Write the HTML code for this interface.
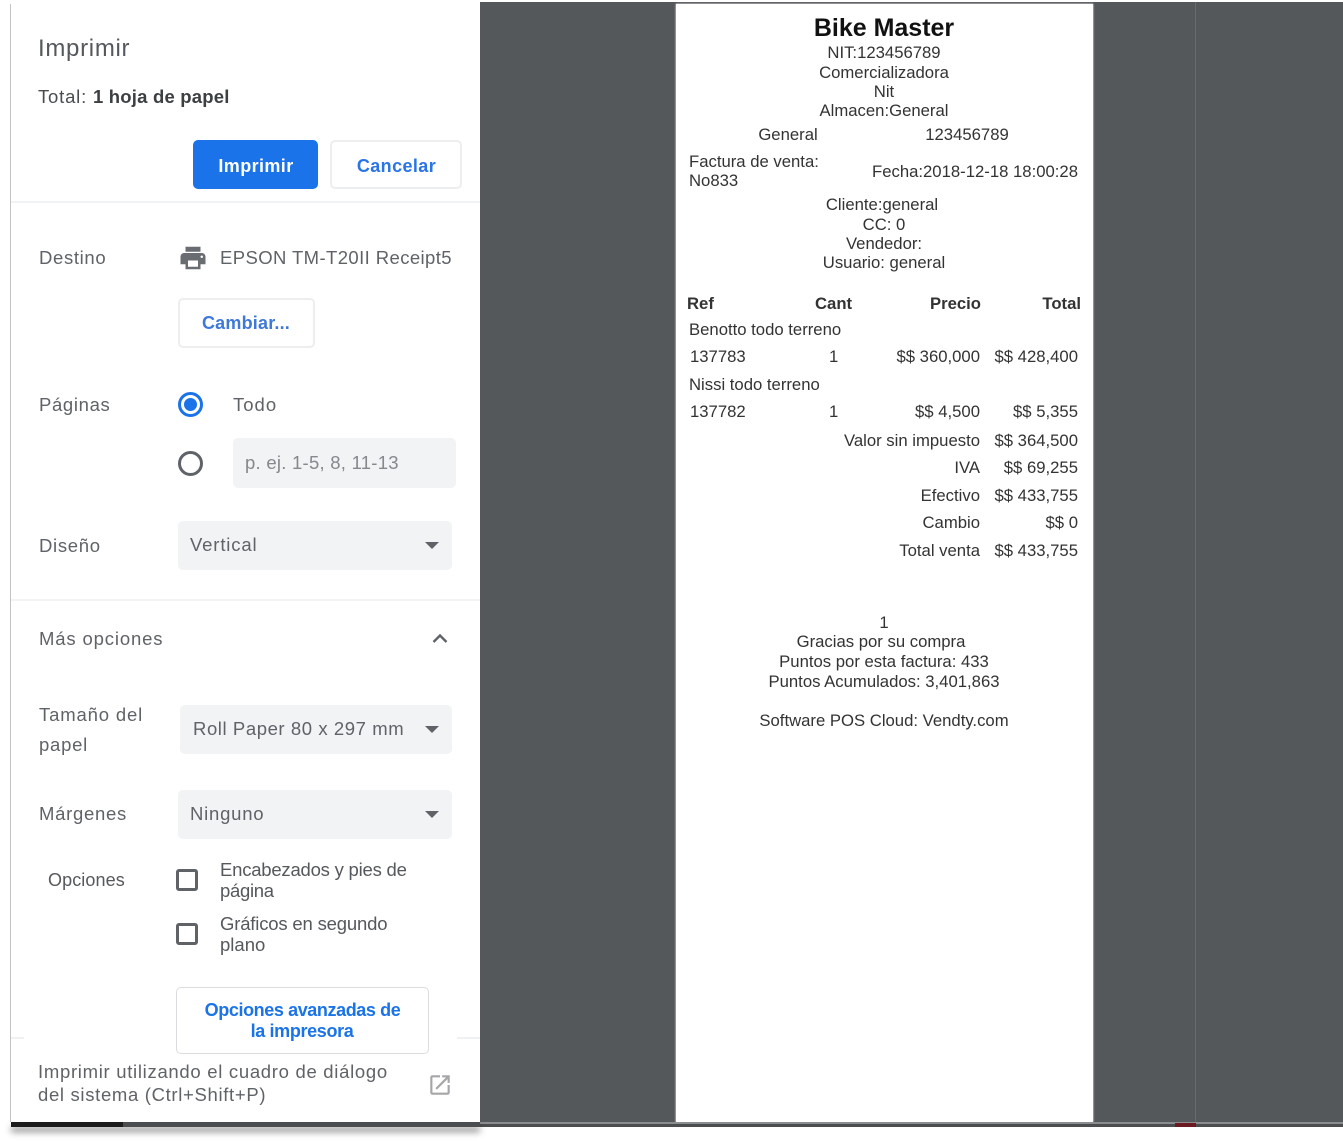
<!DOCTYPE html>
<html lang="es"><head><meta charset="utf-8"><title>Imprimir</title>
<style>
html,body{margin:0;padding:0;background:#fff}
#p{position:relative;width:1343px;height:1141px;overflow:hidden;background:#fff;font-family:"Liberation Sans",sans-serif}
.t{position:absolute;white-space:nowrap;line-height:20px;height:20px;filter:blur(.35px)}
.g{color:#5f6368;font-size:18.5px;letter-spacing:.35px}
.b{color:#2a75e6;font-weight:700;font-size:18px}
.r{color:#333;font-size:16.7px}
.c{transform:translateX(-50%)}
.box{position:absolute;box-sizing:border-box}
.btn{border:2px solid #eceef0;border-radius:5px;background:#fff}
.sel{background:#f1f3f4;border-radius:5px}
.cb{position:absolute;box-sizing:border-box;width:22px;height:22px;border:3px solid #5f6368;border-radius:3px}
.tri{position:absolute;width:0;height:0;border-left:7.5px solid transparent;border-right:7.5px solid transparent;border-top:7.5px solid #5f6368}
</style></head><body><div id="p">
<div class="box" style="left:480px;top:2px;width:863px;height:1120px;background:#54585b"></div>
<div class="box" style="left:1195px;top:2px;width:1px;height:1120px;background:#666a6d"></div>
<div class="box" style="left:480px;top:1122px;width:863px;height:2px;background:#8a8c8e"></div>
<div class="box" style="left:480px;top:1124px;width:863px;height:3px;background:#4b4d4f"></div>
<div class="box" style="left:1175px;top:1123px;width:21px;height:4px;background:#6b1a22"></div>
<div class="box" style="left:11px;top:1122px;width:469px;height:5px;background:#4b4d4f;box-shadow:0 5px 7px rgba(0,0,0,.45)"></div>
<div class="box" style="left:11px;top:1122px;width:112px;height:5px;background:#1c1c1c"></div>
<div class="box" style="left:10px;top:4px;width:470px;height:1118px;background:#fff;border-left:1px solid #c4c4c4"></div>

<div class="t g" style="left:38px;top:39px;font-size:24px;letter-spacing:.7px;color:#55585c">Imprimir</div>
<div class="t g" style="left:38px;top:87px;color:#4a4d50;letter-spacing:.8px">Total: <b style="color:#3c4043;letter-spacing:.2px">1 hoja de papel</b></div>
<div class="box" style="left:193px;top:140px;width:125px;height:49px;background:#1a73e8;border-radius:5px"></div>
<div class="t c" style="left:256px;top:156px;color:#fff;font-weight:700;font-size:18px;letter-spacing:.4px">Imprimir</div>
<div class="box btn" style="left:330px;top:140px;width:132px;height:49px"></div>
<div class="t b c" style="left:396.500px;top:156px;letter-spacing:.4px">Cancelar</div>
<div class="box" style="left:11px;top:201px;width:469px;height:2px;background:#f2f3f4"></div>

<div class="t g" style="left:39px;top:248px;letter-spacing:.65px">Destino</div>
<svg style="position:absolute;left:178px;top:243px" width="30" height="30" viewBox="0 0 24 24"><path fill="#696d72" d="M19 8H5c-1.66 0-3 1.34-3 3v6h4v4h12v-4h4v-6c0-1.66-1.34-3-3-3zm-3 11H8v-5h8v5zm3-7c-.55 0-1-.45-1-1s.45-1 1-1 1 .45 1 1-.45 1-1 1zm-1-9H6v4h12V3z"/></svg>
<div class="t g" style="left:220px;top:248px;letter-spacing:.4px">EPSON TM-T20II Receipt5</div>
<div class="box btn" style="left:178px;top:298px;width:137px;height:50px"></div>
<div class="t b c" style="left:246px;top:313px;color:#3f78d8;letter-spacing:.2px">Cambiar...</div>

<div class="t g" style="left:39px;top:395px;letter-spacing:.65px">Páginas</div>
<div class="box" style="left:178px;top:392px;width:25px;height:25px;border:3px solid #1a73e8;border-radius:50%"></div>
<div class="box" style="left:184px;top:398px;width:13px;height:13px;background:#1a73e8;border-radius:50%"></div>
<div class="t g" style="left:233px;top:395px;letter-spacing:1px">Todo</div>
<div class="box" style="left:178px;top:451px;width:25px;height:25px;border:3px solid #5f6368;border-radius:50%"></div>
<div class="box sel" style="left:233px;top:438px;width:223px;height:50px"></div>
<div class="t g" style="left:245px;top:453px;color:#85888c;letter-spacing:.25px">p. ej. 1-5, 8, 11-13</div>

<div class="t g" style="left:39px;top:536px;letter-spacing:.68px">Diseño</div>
<div class="box sel" style="left:178px;top:521px;width:274px;height:49px"></div>
<div class="t g" style="left:190px;top:535px;letter-spacing:.85px">Vertical</div>
<div class="tri" style="left:425px;top:542px"></div>
<div class="box" style="left:11px;top:599px;width:469px;height:2px;background:#f2f3f4"></div>

<div class="t g" style="left:39px;top:629px;letter-spacing:.85px">Más opciones</div>
<svg style="position:absolute;left:430px;top:630px" width="20" height="16" viewBox="0 0 20 16"><path d="M3.5 12 10 5.5 16.500 12" fill="none" stroke="#5f6368" stroke-width="2.4"/></svg>

<div class="t g" style="left:39px;top:705px;letter-spacing:.85px">Tamaño del</div>
<div class="t g" style="left:39px;top:735px;letter-spacing:.75px">papel</div>
<div class="box sel" style="left:180px;top:705px;width:272px;height:49px"></div>
<div class="t g" style="left:193px;top:719px;letter-spacing:.58px">Roll Paper 80 x 297 mm</div>
<div class="tri" style="left:425px;top:726px"></div>

<div class="t g" style="left:39px;top:804px;letter-spacing:.72px">Márgenes</div>
<div class="box sel" style="left:178px;top:790px;width:274px;height:49px"></div>
<div class="t g" style="left:190px;top:804px;letter-spacing:.78px">Ninguno</div>
<div class="tri" style="left:425px;top:811px"></div>

<div class="t g" style="left:48px;top:870px;color:#55585c;font-size:18px;letter-spacing:.1px">Opciones</div>
<div class="cb" style="left:176px;top:869px"></div>
<div class="t g" style="left:220px;top:860px;color:#55585c;letter-spacing:-.22px">Encabezados y pies de</div>
<div class="t g" style="left:220px;top:881px;color:#55585c;letter-spacing:-.3px">página</div>
<div class="cb" style="left:176px;top:923px"></div>
<div class="t g" style="left:220px;top:914px;color:#55585c;letter-spacing:-.18px">Gráficos en segundo</div>
<div class="t g" style="left:220px;top:935px;color:#55585c;letter-spacing:0">plano</div>

<div class="box" style="left:11px;top:1037px;width:13px;height:2px;background:#f0f1f2"></div>
<div class="box" style="left:457px;top:1037px;width:23px;height:2px;background:#f0f1f2"></div>
<div class="box" style="left:176px;top:987px;width:253px;height:67px;background:#fff;border:1px solid #dadce0;border-radius:5px"></div>
<div class="t b c" style="left:302.500px;top:1000px;color:#1a73e8;letter-spacing:-.4px">Opciones avanzadas de</div>
<div class="t b c" style="left:302px;top:1021px;color:#1a73e8;letter-spacing:-.35px">la impresora</div>
<div class="t g" style="left:38px;top:1062px;letter-spacing:.7px">Imprimir utilizando el cuadro de diálogo</div>
<div class="t g" style="left:38px;top:1085px;letter-spacing:.67px">del sistema (Ctrl+Shift+P)</div>
<svg style="position:absolute;left:427px;top:1072px" width="26" height="26" viewBox="0 0 24 24"><path fill="#a4a6a9" d="M19 19H5V5h7V3H5a2 2 0 0 0-2 2v14a2 2 0 0 0 2 2h14c1.100 0 2-.9 2-2v-7h-2v7zM14 3v2h3.590l-9.830 9.830 1.410 1.410L19 6.410V10h2V3h-7z"/></svg>

<div class="box" style="left:676px;top:4px;width:417px;height:1118px;background:#fff;box-shadow:-1px 0 1px #9a9c9e,1px 0 1px #9a9c9e,0 -1px 1px #9a9c9e"></div>
<div class="t c" style="left:884px;top:18px;font-size:25px;font-weight:700;color:#111">Bike Master</div>
<div class="t r c" style="left:884px;top:43px">NIT:123456789</div>
<div class="t r c" style="left:884px;top:63px">Comercializadora</div>
<div class="t r c" style="left:884px;top:82px">Nit</div>
<div class="t r c" style="left:884px;top:101px">Almacen:General</div>
<div class="t r c" style="left:788px;top:125px">General</div>
<div class="t r c" style="left:967px;top:125px">123456789</div>
<div class="t r" style="left:689px;top:152px">Factura de venta:</div>
<div class="t r" style="left:689px;top:171px">No833</div>
<div class="t r" style="right:265px;top:162px">Fecha:2018-12-18 18:00:28</div>
<div class="t r c" style="left:882px;top:195px">Cliente:general</div>
<div class="t r c" style="left:884px;top:215px">CC: 0</div>
<div class="t r c" style="left:884px;top:234px">Vendedor:</div>
<div class="t r c" style="left:884px;top:253px">Usuario: general</div>

<div class="t r" style="left:687px;top:294px;font-weight:700">Ref</div>
<div class="t r" style="left:815px;top:294px;font-weight:700">Cant</div>
<div class="t r" style="right:362px;top:294px;font-weight:700">Precio</div>
<div class="t r" style="right:262px;top:294px;font-weight:700">Total</div>
<div class="t r" style="left:689px;top:320px">Benotto todo terreno</div>
<div class="t r" style="left:690px;top:347px">137783</div>
<div class="t r" style="left:829px;top:347px">1</div>
<div class="t r" style="right:363px;top:347px">$$ 360,000</div>
<div class="t r" style="right:265px;top:347px">$$ 428,400</div>
<div class="t r" style="left:689px;top:375px">Nissi todo terreno</div>
<div class="t r" style="left:690px;top:402px">137782</div>
<div class="t r" style="left:829px;top:402px">1</div>
<div class="t r" style="right:363px;top:402px">$$ 4,500</div>
<div class="t r" style="right:265px;top:402px">$$ 5,355</div>
<div class="t r" style="right:363px;top:431px">Valor sin impuesto</div>
<div class="t r" style="right:265px;top:431px">$$ 364,500</div>
<div class="t r" style="right:363px;top:458px">IVA</div>
<div class="t r" style="right:265px;top:458px">$$ 69,255</div>
<div class="t r" style="right:363px;top:486px">Efectivo</div>
<div class="t r" style="right:265px;top:486px">$$ 433,755</div>
<div class="t r" style="right:363px;top:513px">Cambio</div>
<div class="t r" style="right:265px;top:513px">$$ 0</div>
<div class="t r" style="right:363px;top:541px">Total venta</div>
<div class="t r" style="right:265px;top:541px">$$ 433,755</div>

<div class="t r c" style="left:884px;top:613px">1</div>
<div class="t r c" style="left:881px;top:632px">Gracias por su compra</div>
<div class="t r c" style="left:884px;top:652px">Puntos por esta factura: 433</div>
<div class="t r c" style="left:884px;top:672px">Puntos Acumulados: 3,401,863</div>
<div class="t r c" style="left:884px;top:711px">Software POS Cloud: Vendty.com</div>
</div></body></html>
